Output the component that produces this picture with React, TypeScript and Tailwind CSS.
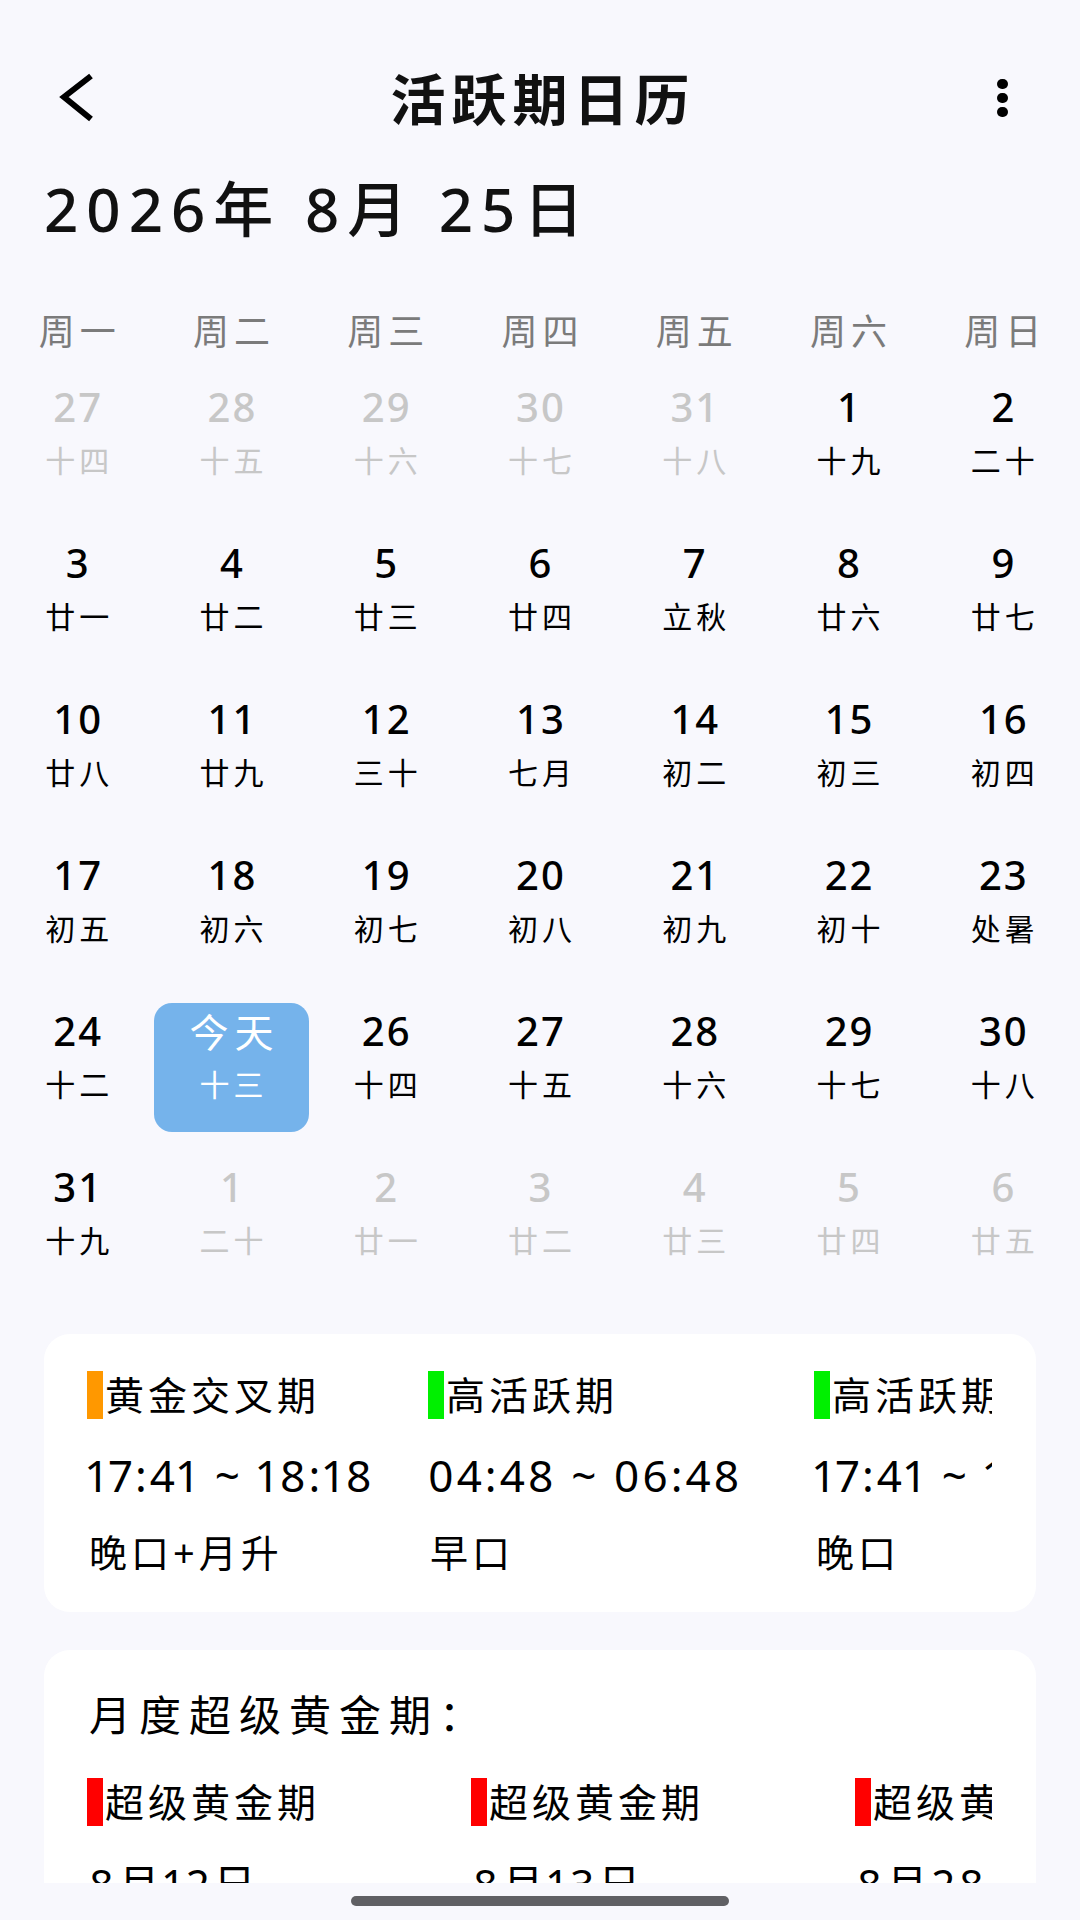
import React from "react";

type Day = { d: string; lunar: string; muted?: boolean; today?: boolean };

const WEEK = ["周一", "周二", "周三", "周四", "周五", "周六", "周日"];

const DAYS: Day[] = [
  { d: "27", lunar: "十四", muted: true },
  { d: "28", lunar: "十五", muted: true },
  { d: "29", lunar: "十六", muted: true },
  { d: "30", lunar: "十七", muted: true },
  { d: "31", lunar: "十八", muted: true },
  { d: "1", lunar: "十九" },
  { d: "2", lunar: "二十" },
  { d: "3", lunar: "廿一" },
  { d: "4", lunar: "廿二" },
  { d: "5", lunar: "廿三" },
  { d: "6", lunar: "廿四" },
  { d: "7", lunar: "立秋" },
  { d: "8", lunar: "廿六" },
  { d: "9", lunar: "廿七" },
  { d: "10", lunar: "廿八" },
  { d: "11", lunar: "廿九" },
  { d: "12", lunar: "三十" },
  { d: "13", lunar: "七月" },
  { d: "14", lunar: "初二" },
  { d: "15", lunar: "初三" },
  { d: "16", lunar: "初四" },
  { d: "17", lunar: "初五" },
  { d: "18", lunar: "初六" },
  { d: "19", lunar: "初七" },
  { d: "20", lunar: "初八" },
  { d: "21", lunar: "初九" },
  { d: "22", lunar: "初十" },
  { d: "23", lunar: "处暑" },
  { d: "24", lunar: "十二" },
  { d: "25", lunar: "十三", today: true },
  { d: "26", lunar: "十四" },
  { d: "27", lunar: "十五" },
  { d: "28", lunar: "十六" },
  { d: "29", lunar: "十七" },
  { d: "30", lunar: "十八" },
  { d: "31", lunar: "十九" },
  { d: "1", lunar: "二十", muted: true },
  { d: "2", lunar: "廿一", muted: true },
  { d: "3", lunar: "廿二", muted: true },
  { d: "4", lunar: "廿三", muted: true },
  { d: "5", lunar: "廿四", muted: true },
  { d: "6", lunar: "廿五", muted: true },
];

const PERIODS = [
  { name: "黄金交叉期", time: "17:41 ~ 18:18", note: "晚口+月升", bar: "bg-[#ff9800]", w: "w-[341px]" },
  { name: "高活跃期", time: "04:48 ~ 06:48", note: "早口", bar: "bg-[#00f000]", w: "w-[386px]" },
  { name: "高活跃期", time: "17:41 ~ 18:48", note: "晚口", bar: "bg-[#00f000]", w: "w-[386px]" },
];

const SUPER = ["8月12日", "8月13日", "8月28日"];

function Cell({ day }: { day: Day }) {
  if (day.today) {
    return (
      <div className="flex h-[129px] flex-col items-center rounded-[18px] bg-[#75b3eb] text-white">
        <div className="flex h-[56px] items-center pl-[6px] text-[39px] leading-none tracking-[6px]">今天</div>
        <div className="flex h-[52px] items-center pl-[4px] text-[30px] leading-none tracking-[4px]">{day.lunar}</div>
      </div>
    );
  }
  const tone = day.muted ? "text-[#c7c7c7]" : "text-black";
  return (
    <div className={`flex h-[129px] flex-col items-center ${tone}`}>
      <div className="flex h-[56px] items-center pl-[2px] text-[40px] font-medium leading-none tracking-[2px]">{day.d}</div>
      <div className="flex h-[52px] items-center pl-[4px] text-[30px] leading-none tracking-[4px]">{day.lunar}</div>
    </div>
  );
}

export default function App() {
  return (
    <div
      className="flex h-[1920px] w-[1080px] flex-col overflow-hidden bg-[#f8f8fd] text-black"
      style={{ fontFamily: '"Noto Sans", "Noto Sans CJK SC", sans-serif' }}
    >
      <main className="h-[1883px] overflow-hidden pt-[40px]">
        {/* top bar */}
        <header className="grid h-[116px] grid-cols-[1fr_auto_1fr] items-center px-[56px]">
          <svg width="40" height="52" viewBox="0 0 40 52" className="ml-[2px]">
            <polyline points="33,4 6,25 33,47" fill="none" stroke="#000" strokeWidth="6" />
          </svg>
          <h1 className="pl-[6px] text-[55px] font-bold leading-none tracking-[6px] text-[#111]">活跃期日历</h1>
          <div className="mr-[16px] flex flex-col items-end gap-[4px]">
            <span className="h-[10px] w-[11px] rounded-full bg-black" />
            <span className="h-[10px] w-[11px] rounded-full bg-black" />
            <span className="h-[10px] w-[11px] rounded-full bg-black" />
          </div>
        </header>

        <div className="mt-[20px] flex h-[66px] items-center pl-[44px] text-[60px] font-medium leading-none tracking-[8px] text-[#111]">
          2026年 8月 25日
        </div>

        <div className="mt-[60px] grid h-[60px] grid-cols-7 items-center">
          {WEEK.map((w) => (
            <div key={w} className="pl-[5px] text-center text-[36px] leading-none tracking-[5px] text-[#7b7b7b]">
              {w}
            </div>
          ))}
        </div>

        <div className="mt-[17px] grid grid-cols-7 gap-y-[27px]">
          {DAYS.map((day, i) => (
            <Cell key={i} day={day} />
          ))}
        </div>

        {/* today's windows */}
        <section className="mx-[44px] mt-[46px] rounded-[26px] bg-white pb-[34px] pl-[43px] pr-[44px] pt-[37px]">
          <div className="-my-[8px] flex overflow-hidden py-[8px]">
            {PERIODS.map((p, i) => (
              <div key={i} className={`flex shrink-0 flex-col ${p.w}`}>
                <div className="flex h-[48px] items-center">
                  <span className={`h-[48px] w-[16px] shrink-0 ${p.bar}`} />
                  <span className="ml-[2px] whitespace-nowrap text-[39px] leading-[48px] tracking-[4px]">{p.name}</span>
                </div>
                <div className="mt-[28px] flex h-[56px] items-center whitespace-nowrap text-[44px] leading-[56px] tracking-[3px] proportional-nums">
                  {p.time}
                </div>
                <div className="mt-[23px] flex h-[52px] items-center pl-[2px] whitespace-nowrap text-[38px] leading-[52px] tracking-[4px]">
                  {p.note}
                </div>
              </div>
            ))}
          </div>
        </section>

        {/* monthly super golden */}
        <section className="mx-[44px] mt-[38px] rounded-[26px] bg-white pb-[30px] pl-[43px] pr-[44px] pt-[39px]">
          <div className="flex h-[52px] items-center pl-[2px] text-[42px] leading-none tracking-[8px]">月度超级黄金期：</div>
          <div className="-my-[8px] mt-[29px] flex overflow-hidden py-[8px]">
            {SUPER.map((d) => (
              <div key={d} className="flex w-[384px] shrink-0 flex-col">
                <div className="flex h-[48px] items-center">
                  <span className="h-[48px] w-[16px] shrink-0 bg-[#ff0000]" />
                  <span className="ml-[2px] whitespace-nowrap text-[39px] leading-[48px] tracking-[4px]">超级黄金期</span>
                </div>
                <div className="mt-[32px] flex h-[52px] items-center pl-[2px] whitespace-nowrap text-[42px] leading-[52px] tracking-[4px] proportional-nums">
                  {d}
                </div>
              </div>
            ))}
          </div>
        </section>
      </main>

      <footer className="flex h-[37px] justify-center pt-[13px]">
        <div className="h-[10px] w-[378px] rounded-full bg-[#606064]" />
      </footer>
    </div>
  );
}
